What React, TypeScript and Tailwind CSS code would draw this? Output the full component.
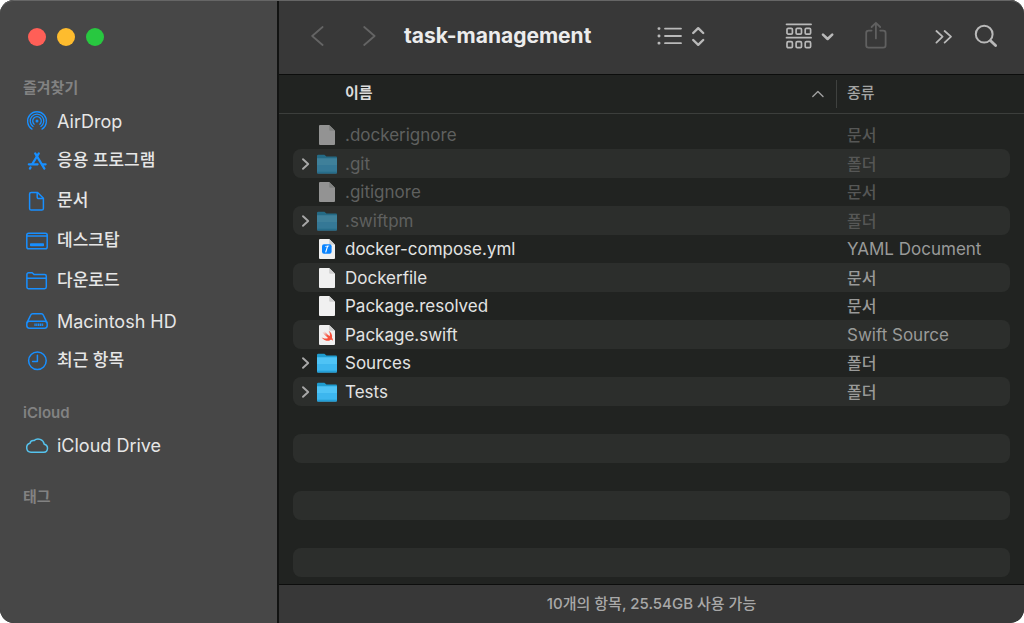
import type { ReactNode } from "react";

type Entry = {
  name: string;
  kind: string;
  icon: "file" | "folder" | "yaml" | "swift";
  hidden?: boolean;
};

const entries: Entry[] = [
  { name: ".dockerignore", kind: "문서", icon: "file", hidden: true },
  { name: ".git", kind: "폴더", icon: "folder", hidden: true },
  { name: ".gitignore", kind: "문서", icon: "file", hidden: true },
  { name: ".swiftpm", kind: "폴더", icon: "folder", hidden: true },
  { name: "docker-compose.yml", kind: "YAML Document", icon: "yaml" },
  { name: "Dockerfile", kind: "문서", icon: "file" },
  { name: "Package.resolved", kind: "문서", icon: "file" },
  { name: "Package.swift", kind: "Swift Source", icon: "swift" },
  { name: "Sources", kind: "폴더", icon: "folder" },
  { name: "Tests", kind: "폴더", icon: "folder" },
];

const emptyRows = [0, 1, 2, 3, 4, 5];

const hangul = /[가-힣]/;

function SideIcon({ children, cloud }: { children: ReactNode; cloud?: boolean }) {
  return (
    <svg
      width="24"
      height="24"
      viewBox="0 0 24 24"
      fill="none"
      strokeWidth="1.5"
      strokeLinecap="round"
      strokeLinejoin="round"
      aria-hidden="true"
      className={cloud ? "shrink-0 stroke-[#55c3ee]" : "shrink-0 stroke-[#188fff]"}
    >
      {children}
    </svg>
  );
}

const favorites: { label: string; icon: ReactNode }[] = [
  {
    label: "AirDrop",
    icon: (
      <SideIcon>
        <g strokeWidth="1.3">
          <path d="M7 20.1A9.4 9.4 0 1 1 17 20.1" />
          <path d="M8.1 17.5A6.8 6.8 0 1 1 15.9 17.5" />
          <path d="M9.2 15.2A4.3 4.3 0 1 1 14.8 15.2" />
        </g>
        <circle cx="12" cy="12.1" r="1.5" fill="#188fff" stroke="none" />
      </SideIcon>
    ),
  },
  {
    label: "응용 프로그램",
    icon: (
      <SideIcon>
        <g strokeWidth="2.2">
          <path d="M10.2 4.4L19.4 19.6" />
          <path d="M13.8 4.4L7.4 14.8" />
          <path d="M3.8 15.3H12.6" />
          <path d="M17 15.3H20.6" />
          <path d="M5.6 18.4L4.9 19.6" />
        </g>
      </SideIcon>
    ),
  },
  {
    label: "문서",
    icon: (
      <SideIcon>
        <path d="M6.2 3.5H12.6L18.4 9.3V19.4A1.6 1.6 0 0 1 16.8 21H6.2A1.6 1.6 0 0 1 4.6 19.4V5.1A1.6 1.6 0 0 1 6.2 3.5Z" />
        <path d="M12.2 3.8V8.3A1.3 1.3 0 0 0 13.5 9.6H18" />
      </SideIcon>
    ),
  },
  {
    label: "데스크탑",
    icon: (
      <SideIcon>
        <rect x="1.8" y="4.2" width="20.4" height="15.6" rx="1.8" />
        <path d="M2 7.1H22" />
        <rect x="5" y="14.2" width="14" height="3" rx="0.8" fill="#188fff" stroke="none" />
      </SideIcon>
    ),
  },
  {
    label: "다운로드",
    icon: (
      <SideIcon>
        <path d="M1.9 18V5.5A1.7 1.7 0 0 1 3.6 3.8H7.2L9.2 5.6H19.6A1.7 1.7 0 0 1 21.3 7.3V18A1.7 1.7 0 0 1 19.6 19.7H3.6A1.7 1.7 0 0 1 1.9 18Z" />
        <path d="M2 9.3H21.2" />
      </SideIcon>
    ),
  },
  {
    label: "Macintosh HD",
    icon: (
      <SideIcon>
        <path d="M2.2 13.4L5.6 6.2Q6.2 4.8 7.7 4.8H16.3Q17.8 4.8 18.4 6.2L21.8 13.4" />
        <rect x="1.8" y="12.2" width="20.4" height="7" rx="2.6" />
        <path d="M9.4 15.8H18.6" strokeWidth="2.6" strokeDasharray="1.3 0.5" strokeLinecap="butt" />
      </SideIcon>
    ),
  },
  {
    label: "최근 항목",
    icon: (
      <SideIcon>
        <circle cx="12.4" cy="11.8" r="8.8" />
        <path d="M12.4 6.2V12.4H7.6" />
      </SideIcon>
    ),
  },
];

function SideLink({ label, children }: { label: string; children: ReactNode }) {
  const size = hangul.test(label) ? "text-[17px] font-medium" : "text-[18px]";
  return (
    <li>
      <a href="#" className="flex h-10 items-center gap-2 pl-[25px] text-[#e6e6e6]">
        {children}
        <span className={size}>{label}</span>
      </a>
    </li>
  );
}

function SideHeading({ children }: { children: ReactNode }) {
  return (
    <h2 className="pl-[23px] text-[15px] leading-6 font-semibold text-[#828282]">{children}</h2>
  );
}

function Sidebar() {
  return (
    <aside className="flex w-[279px] shrink-0 flex-col border-r-2 border-[#121312] bg-[#474747]">
      <div className="flex gap-[11px] pt-7 pl-7">
        <button type="button" aria-label="닫기" className="size-[18px] rounded-full bg-[#ff5f57]" />
        <button type="button" aria-label="최소화" className="size-[18px] rounded-full bg-[#febc2e]" />
        <button type="button" aria-label="확대" className="size-[18px] rounded-full bg-[#28c840]" />
      </div>
      <nav className="flex flex-col pt-[30px]">
        <SideHeading>즐겨찾기</SideHeading>
        <ul className="pt-px">
          {favorites.map((f) => (
            <SideLink key={f.label} label={f.label}>
              {f.icon}
            </SideLink>
          ))}
        </ul>
        <div className="pt-5">
          <SideHeading>iCloud</SideHeading>
        </div>
        <ul>
          <SideLink label="iCloud Drive">
            <SideIcon cloud>
              <path d="M6 19.3A4.6 4.6 0 0 1 5 10.3A3.6 3.6 0 0 1 9 7.6A6.2 6.2 0 0 1 19.2 11.2A4.1 4.1 0 0 1 18.8 19.3Z" />
            </SideIcon>
          </SideLink>
        </ul>
        <div className="pt-5">
          <SideHeading>태그</SideHeading>
        </div>
      </nav>
    </aside>
  );
}

function Toolbar() {
  return (
    <header className="flex h-[75px] shrink-0 items-center border-b border-[#0c0d0c] bg-[#383838] pr-[26px] pb-[2px] pl-8 text-[#b9b9b9]">
      <div className="flex gap-9 text-[#646464]">
        <button type="button" aria-label="뒤로">
          <svg width="16" height="24" viewBox="0 0 16 24" fill="none" stroke="currentColor" strokeWidth="1.8" strokeLinecap="round" strokeLinejoin="round">
            <path d="M11.6 3L1.2 12L11.6 21" />
          </svg>
        </button>
        <button type="button" aria-label="앞으로">
          <svg width="16" height="24" viewBox="0 0 16 24" fill="none" stroke="currentColor" strokeWidth="1.8" strokeLinecap="round" strokeLinejoin="round">
            <path d="M1.2 3L11.6 12L1.2 21" />
          </svg>
        </button>
      </div>
      <h1 className="min-w-0 flex-1 truncate pl-[25px] text-[21px] leading-8 font-bold text-[#ececec]">
        task-management
      </h1>
      <button type="button" aria-label="목록 보기" className="mr-[79px] flex items-center gap-2">
        <svg width="26" height="24" viewBox="0 0 26 24" fill="none" stroke="currentColor" strokeWidth="1.8" strokeLinecap="round">
          <path d="M8 4.6H24M8 12H24M8 19.2H24" />
          <path d="M1.9 4.6H2.1M1.9 12H2.1M1.9 19.2H2.1" strokeWidth="2.8" />
        </svg>
        <svg width="15" height="24" viewBox="0 0 15 24" fill="none" stroke="currentColor" strokeWidth="2.4" strokeLinecap="round" strokeLinejoin="round">
          <path d="M2.2 9L7.2 4.2L12.2 9M2.2 16L7.2 20.8L12.2 16" />
        </svg>
      </button>
      <button type="button" aria-label="그룹" className="mr-[29px] flex items-center gap-2">
        <svg width="28" height="28" viewBox="0 0 28 28" fill="none" stroke="currentColor" strokeWidth="1.7">
          <path d="M1.5 2.3H26.1M1.5 15.7H26.1" strokeLinecap="round" />
          <rect x="2" y="6.3" width="5.4" height="5.8" rx="1.2" />
          <rect x="11.1" y="6.3" width="5.4" height="5.8" rx="1.2" />
          <rect x="20.2" y="6.3" width="5.4" height="5.8" rx="1.2" />
          <rect x="2" y="19.7" width="5.4" height="6" rx="1.2" />
          <rect x="11.1" y="19.7" width="5.4" height="6" rx="1.2" />
          <rect x="20.2" y="19.7" width="5.4" height="6" rx="1.2" />
        </svg>
        <svg width="14" height="24" viewBox="0 0 14 24" fill="none" stroke="currentColor" strokeWidth="2.6" strokeLinecap="round" strokeLinejoin="round">
          <path d="M2 10.6L6.6 15L11.2 10.6" />
        </svg>
      </button>
      <button type="button" aria-label="공유" className="mr-[46px] text-[#606060]">
        <svg width="24" height="30" viewBox="0 0 24 30" fill="none" stroke="currentColor" strokeWidth="1.8" strokeLinecap="round" strokeLinejoin="round">
          <path d="M7.6 9.6H4.6A2.4 2.4 0 0 0 2.2 12V24.2A2.4 2.4 0 0 0 4.6 26.6H19.2A2.4 2.4 0 0 0 21.6 24.2V12A2.4 2.4 0 0 0 19.2 9.6H16.2" />
          <path d="M11.9 17.4V2M7.6 6L11.9 1.8L16.2 6" />
        </svg>
      </button>
      <button type="button" aria-label="더 보기" className="mr-5">
        <svg width="20" height="24" viewBox="0 0 20 24" fill="none" stroke="currentColor" strokeWidth="1.8" strokeLinecap="round" strokeLinejoin="round">
          <path d="M2.4 7L8.6 12.7L2.4 18.6M10.6 7L17 12.7L10.6 18.6" />
        </svg>
      </button>
      <button type="button" aria-label="검색">
        <svg width="24" height="26" viewBox="0 0 24 26" fill="none" stroke="currentColor" strokeLinecap="round">
          <circle cx="10.2" cy="11.2" r="8.4" strokeWidth="2" />
          <path d="M16.6 17.7L21.6 22.6" strokeWidth="2.8" />
        </svg>
      </button>
    </header>
  );
}

function EntryIcon({ entry }: { entry: Entry }) {
  const dim = entry.hidden ? "shrink-0 opacity-55" : "shrink-0";
  if (entry.icon === "folder") {
    return (
      <svg width="20" height="20" viewBox="0 0 20 20" className={dim} aria-hidden="true">
        <path d="M0 2A1.2 1.2 0 0 1 1.2 0.8H7.4L9.4 2.4H19A1 1 0 0 1 20 3.4V6H0Z" fill="#1f9ccf" />
        <path d="M0 4.2H20V18.4A1 1 0 0 1 19 19.4H1A1 1 0 0 1 0 18.4Z" fill="#4fc3f5" />
        <path d="M0 11H20V17.4H0Z" fill="#3db6ee" />
        <path d="M0 17.6H20V18.4A1 1 0 0 1 19 19.4H1A1 1 0 0 1 0 18.4Z" fill="#249fd8" />
      </svg>
    );
  }
  return (
    <svg width="20" height="20" viewBox="0 0 20 20" className={dim} aria-hidden="true">
      <path d="M3 0H12.2L18 5.8V19A1 1 0 0 1 17 20H3A1 1 0 0 1 2 19V1A1 1 0 0 1 3 0Z" fill="#f0f0f0" />
      <path d="M12.2 0L18 5.8H13.2A1 1 0 0 1 12.2 4.8Z" fill="#cfcfcf" />
      {entry.icon === "yaml" && (
        <>
          <rect x="5" y="5.2" width="9.6" height="9.6" rx="2" fill="#0a84ff" />
          <path d="M10.6 7.2L8.8 13" stroke="#ffffff" strokeWidth="1.1" strokeLinecap="round" />
          <path d="M8.6 7.4L11.8 7" stroke="#ffffff" strokeWidth="0.8" strokeLinecap="round" />
        </>
      )}
      {entry.icon === "swift" && (
        <path
          transform="translate(3.2 3.6) scale(0.25)"
          fill="#f8513c"
          d="M47.06 36.66c.066-.224.134-.446.191-.675C49.71 26.17 43.7 14.57 33.53 8.46c4.46 6.04 6.43 13.36 4.68 19.76-.156.571-.344 1.12-.552 1.653-.225-.148-.51-.316-.89-.527 0 0-10.13-6.25-21.1-17.31-.288-.29 5.85 8.78 12.82 16.14-3.28-1.84-12.43-8.5-18.23-13.8.712 1.187 1.56 2.33 2.49 3.43 4.84 6.14 11.16 13.73 18.73 19.55-5.32 3.25-12.83 3.51-20.3.005-1.85-.866-3.58-1.92-5.19-3.1 3.16 5.06 8.04 9.43 13.97 11.98 7.07 3.04 14.1 2.83 19.34.05.2-.12.45-.26.72-.4 2.52-1.31 7.49-2.63 10.16 2.56.65 1.27 2.04-5.42-3.12-11.82z"
        />
      )}
    </svg>
  );
}

function FileRow({ entry, striped }: { entry?: Entry; striped: boolean }) {
  const height = striped ? "h-[29px]" : "h-[28px]";
  const fill = striped ? "bg-[#2c2e2c]" : "";
  const nameColor = entry?.hidden ? "text-[#5f605f]" : "text-[#e3e3e3]";
  const kindColor = entry?.hidden ? "text-[#565756]" : "text-[#999a99]";
  const kindSize = entry && hangul.test(entry.kind) ? "text-[16px] font-medium" : "text-[17px]";
  return (
    <tr>
      <td className="p-0 pl-[14px]">
        <div className={`flex items-center rounded-l-lg pl-2 ${height} ${fill}`}>
          {entry && (
            <>
              <span className="flex w-4 shrink-0">
                {entry.icon === "folder" && (
                  <button type="button" aria-label={`${entry.name} 펼치기`}>
                    <svg width="9" height="14" viewBox="0 0 9 14" fill="none" stroke="#a8a8a8" strokeWidth="1.9" strokeLinecap="round" strokeLinejoin="round">
                      <path d="M2 2.2L7.2 7L2 11.8" />
                    </svg>
                  </button>
                )}
              </span>
              <EntryIcon entry={entry} />
              <span className={`ml-2 truncate text-[17px] leading-6 ${nameColor}`}>{entry.name}</span>
            </>
          )}
        </div>
      </td>
      <td className="p-0 pr-[14px]">
        <div className={`flex items-center rounded-r-lg pl-[11px] ${height} ${fill}`}>
          {entry && (
            <span className={`leading-6 whitespace-nowrap ${kindSize} ${kindColor}`}>{entry.kind}</span>
          )}
        </div>
      </td>
    </tr>
  );
}

function FileTable() {
  return (
    <table className="w-full table-fixed border-separate border-spacing-0 text-left">
      <colgroup>
        <col />
        <col className="w-[188px]" />
      </colgroup>
      <thead>
        <tr>
          <th scope="col" className="h-[39px] border-b border-[#3c3e3c] p-0">
            <button type="button" className="flex h-7 w-full items-center justify-between pr-3 pb-[2px] pl-[66px] text-[15px] leading-6 font-bold text-[#dcdcdc]">
              이름
              <svg width="13" height="10" viewBox="0 0 13 10" fill="none" stroke="#a0a0a0" strokeWidth="1.4" strokeLinecap="round" strokeLinejoin="round" aria-hidden="true">
                <path d="M1.8 8.4L6.9 3.6L12 8.4" />
              </svg>
            </button>
          </th>
          <th scope="col" className="h-[39px] border-b border-[#3c3e3c] p-0">
            <button type="button" className="flex h-7 w-full items-center border-l border-[#3f413f] pb-[2px] pl-[10px] text-[15px] leading-6 font-medium text-[#a3a4a3]">
              종류
            </button>
          </th>
        </tr>
      </thead>
      <tbody className="before:block before:h-[7px]">
        {entries.map((entry, i) => (
          <FileRow key={entry.name} entry={entry} striped={i % 2 === 1} />
        ))}
        {emptyRows.map((i) => (
          <FileRow key={i} striped={i % 2 === 1} />
        ))}
      </tbody>
    </table>
  );
}

export default function App() {
  return (
    <div className="min-h-screen bg-white font-['Inter','Noto_Sans_CJK_KR',sans-serif]">
      <div className="relative flex min-h-screen overflow-hidden rounded-[14px] bg-[#212321]">
        <Sidebar />
        <div className="flex min-w-0 flex-1 flex-col">
          <Toolbar />
          <main className="flex-1">
            <FileTable />
          </main>
          <footer className="flex h-[39px] shrink-0 items-center justify-center border-t border-[#0c0d0c] bg-[#383838] text-[15px] leading-6 font-medium text-[#a8a8a8]">
            10개의 항목, 25.54GB 사용 가능
          </footer>
        </div>
        <div className="pointer-events-none absolute inset-0 rounded-[14px] border-t border-[#666666]" />
      </div>
    </div>
  );
}
